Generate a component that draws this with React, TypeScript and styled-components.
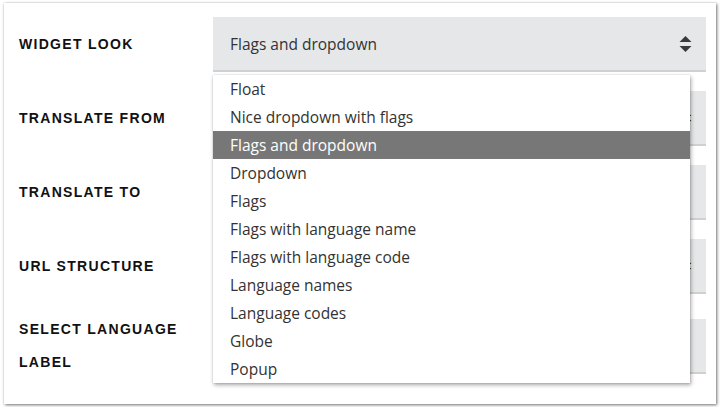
import styled, { createGlobalStyle } from "styled-components";

const GlobalStyle = createGlobalStyle`
  html, body {
    margin: 0;
    padding: 0;
    background: #ffffff;
  }
  body {
    font-family: "Liberation Sans", Arial, sans-serif;
  }
`;

const Card = styled.div`
  margin: 3px 4px;
  width: 712px;
  height: 401px;
  box-sizing: border-box;
  background: #fff;
  box-shadow: 1px 1px 3px rgba(0, 0, 0, 0.55), 0 0 1px rgba(0, 0, 0, 0.2);
  padding: 14px 10px 0 15px;
  display: flex;
  flex-direction: column;
  gap: 19px;
`;

const Row = styled.div`
  display: flex;
  align-items: center;
  min-height: 55px;
`;

const Label = styled.div`
  width: 194px;
  flex-shrink: 0;
  font-family: "Liberation Sans", Arial, sans-serif;
  font-weight: 700;
  font-size: 14px;
  letter-spacing: 1.3px;
  line-height: 33px;
  color: #111;
  text-transform: uppercase;
`;

const Field = styled.div`
  position: relative;
  flex: 1;
`;

const SelectBox = styled.div`
  height: 55px;
  box-sizing: border-box;
  background: #e6e7e8;
  border-bottom: 2px solid #cfd0d1;
  display: flex;
  align-items: center;
  justify-content: space-between;
  padding: 0 14px 0 17px;
  font-family: "Open Sans", Lato, sans-serif;
  font-size: 15.5px;
  color: #333;
`;

const Arrows = styled.svg`
  width: 13px;
  height: 24px;
  flex-shrink: 0;
`;

const Menu = styled.ul`
  position: absolute;
  top: 58px;
  left: 0;
  width: 477px;
  margin: 0;
  padding: 0;
  list-style: none;
  background: #fff;
  box-shadow: 1px 2px 4px rgba(0, 0, 0, 0.35), 0 0 1px rgba(0, 0, 0, 0.25);
  z-index: 2;
`;

const Option = styled.li<{ $active?: boolean }>`
  height: 28px;
  line-height: 29px;
  padding-left: 17px;
  font-family: "Open Sans", Lato, sans-serif;
  font-size: 15.5px;
  color: ${(p) => (p.$active ? "#fff" : "#333")};
  background: ${(p) => (p.$active ? "#777777" : "transparent")};
`;

function Chevrons() {
  return (
    <Arrows viewBox="0 0 13 24">
      <path d="M6.5 4 L12.5 10 L0.5 10 Z" fill="#3a3a3a" />
      <path d="M0.5 14 L12.5 14 L6.5 20 Z" fill="#3a3a3a" />
    </Arrows>
  );
}

const options = [
  "Float",
  "Nice dropdown with flags",
  "Flags and dropdown",
  "Dropdown",
  "Flags",
  "Flags with language name",
  "Flags with language code",
  "Language names",
  "Language codes",
  "Globe",
  "Popup",
];

export default function App() {
  return (
    <>
      <GlobalStyle />
      <Card>
        <Row>
          <Label>Widget look</Label>
          <Field>
            <SelectBox>
              <span>Flags and dropdown</span>
              <Chevrons />
            </SelectBox>
            <Menu>
              {options.map((o) => (
                <Option key={o} $active={o === "Flags and dropdown"}>
                  {o}
                </Option>
              ))}
            </Menu>
          </Field>
        </Row>
        <Row>
          <Label>Translate from</Label>
          <Field>
            <SelectBox>
              <span />
              <Chevrons />
            </SelectBox>
          </Field>
        </Row>
        <Row>
          <Label>Translate to</Label>
          <Field>
            <SelectBox />
          </Field>
        </Row>
        <Row>
          <Label>URL structure</Label>
          <Field>
            <SelectBox>
              <span />
              <Chevrons />
            </SelectBox>
          </Field>
        </Row>
        <Row>
          <Label>
            Select language
            <br />
            label
          </Label>
          <Field>
            <SelectBox />
          </Field>
        </Row>
      </Card>
    </>
  );
}
